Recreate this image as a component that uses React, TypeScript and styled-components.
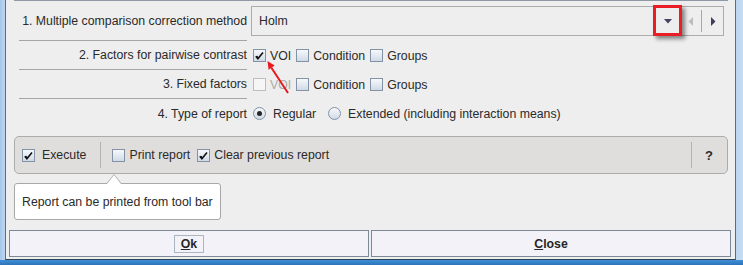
import * as React from "react";
import styled, { createGlobalStyle } from "styled-components";

const GlobalStyle = createGlobalStyle`
  html, body {
    margin: 0;
    padding: 0;
    background: #bcd6f0;
  }
  body {
    font-family: "Liberation Sans", Arial, sans-serif;
    font-size: 12.3px;
    color: #2a2a2a;
  }
`;

const Frame = styled.div`
  position: relative;
  width: 743px;
  height: 265px;
  box-sizing: border-box;
  padding: 0 7px 5px 5px;
  overflow: hidden;
  background:
    linear-gradient(to bottom, transparent 0, transparent 260px, #3f8fd6 260px, #2c73ba 265px),
    linear-gradient(to right, #a7c7e9 0, #bcd6f0 5px, #bcd6f0 736px, #c6def4 743px);
`;

const Window = styled.div`
  height: 260px;
  box-sizing: border-box;
  border: 1px solid #5d6c7c;
  border-top: none;
  border-bottom-color: #2f4458;
  background: #eeeeee;
  display: flex;
  flex-direction: column;
`;

const Main = styled.div`
  padding: 0 7px 0 8px;
  display: flex;
  flex-direction: column;
`;

const Form = styled.div`
  display: grid;
  grid-template-columns: 233px 1fr;
  border-top: 1px solid #8e99a6;
`;

const Label = styled.div<{ $height: number; $last?: boolean }>`
  margin-left: 5px;
  height: ${p => p.$height}px;
  box-sizing: border-box;
  display: flex;
  align-items: center;
  justify-content: flex-end;
  white-space: nowrap;
  border-bottom: ${p => (p.$last ? "none" : "1px solid #a5a5a5")};
`;

const Controls = styled.div<{ $gap?: number }>`
  display: flex;
  align-items: center;
  gap: ${p => p.$gap ?? 5}px;
  padding-left: 6px;
`;

const ComboCell = styled.div`
  padding: 5px 4px 0 4px;
`;

const Combo = styled.div`
  height: 30px;
  box-sizing: border-box;
  border: 1px solid #acacac;
  display: flex;
  align-items: stretch;
  padding-right: 1px;
`;

const ComboText = styled.div`
  flex: 1;
  display: flex;
  align-items: center;
  padding-left: 7px;
`;

const DropButton = styled.div`
  position: relative;
  width: 29px;
  display: flex;
  align-items: center;
  justify-content: center;
`;

const Highlight = styled.div`
  position: absolute;
  top: -2px;
  bottom: -1px;
  left: 0;
  right: 0;
  border: 3.5px solid #ea1c24;
  box-shadow: 3px 3px 4px rgba(0, 0, 0, 0.45);
`;

const NavButton = styled.div<{ $width: number }>`
  width: ${p => p.$width}px;
  display: flex;
  align-items: center;
  justify-content: center;
`;

const ComboSep = styled.div`
  width: 1px;
  margin: 3px 3px;
  background: #a7a7a7;
`;

const BoxMark = styled.span<{ $disabled?: boolean; $round?: boolean }>`
  width: 13px;
  height: 13px;
  box-sizing: border-box;
  flex: none;
  display: inline-flex;
  align-items: center;
  justify-content: center;
  border: 1px solid ${p => (p.$disabled ? "#bdbdbd" : "#8392a5")};
  border-radius: ${p => (p.$round ? "50%" : "0")};
  background: ${p =>
    p.$disabled
      ? "#f6f6f6"
      : "linear-gradient(to bottom, #f6f8fb 0%, #e4eaf2 50%, #cfd9e6 100%)"};
`;

const Dot = styled.span`
  width: 5px;
  height: 5px;
  border-radius: 50%;
  background: #262626;
`;

const OptionItem = styled.label<{ $gap: number; $disabled?: boolean }>`
  display: inline-flex;
  align-items: center;
  gap: ${p => p.$gap}px;
  white-space: nowrap;
  color: ${p => (p.$disabled ? "#ababab" : "inherit")};
`;

const Toolbar = styled.div`
  margin-top: 8px;
  height: 38px;
  box-sizing: border-box;
  border: 1px solid #ababab;
  border-radius: 5px;
  background: #e0dedc;
  display: flex;
  align-items: center;
  padding-left: 7px;
`;

const ToolSep = styled.div<{ $left: number; $right: number }>`
  width: 1px;
  height: 26px;
  margin: 0 ${p => p.$right}px 0 ${p => p.$left}px;
  background: #b3b3b3;
`;

const ToolGap = styled.span`
  width: 7px;
`;

const Spacer = styled.div`
  flex: 1;
`;

const Help = styled.div`
  font-weight: bold;
  font-size: 13px;
  padding: 0 14px 0 13px;
`;

const Tooltip = styled.div`
  position: relative;
  margin-top: 9px;
  width: 207px;
  height: 37px;
  box-sizing: border-box;
  border: 1px solid #a8a8a8;
  border-radius: 3px;
  background: #ffffff;
  display: flex;
  align-items: center;
  padding-left: 7px;
  white-space: nowrap;

  &::before,
  &::after {
    content: "";
    position: absolute;
    width: 0;
    height: 0;
  }
  &::before {
    left: 91px;
    top: -10px;
    border-left: 8.5px solid transparent;
    border-right: 8.5px solid transparent;
    border-bottom: 10px solid #a8a8a8;
  }
  &::after {
    left: 92px;
    top: -9px;
    border-left: 7.5px solid transparent;
    border-right: 7.5px solid transparent;
    border-bottom: 9px solid #ffffff;
  }
`;

const ButtonBar = styled.div`
  margin-top: 10px;
  padding: 0 4px 0 3px;
  display: grid;
  grid-template-columns: 360px 360px;
  column-gap: 2px;
`;

const DialogButton = styled.div`
  height: 27px;
  box-sizing: border-box;
  border: 1px solid #7c8a98;
  background: #f4f2f9;
  display: flex;
  align-items: center;
  justify-content: center;
  font-weight: bold;
  color: #262626;
`;

const FocusRing = styled.span`
  border: 1px solid #aab5c2;
  padding: 0 6px;
  line-height: 16px;
`;

const Annotation = styled.svg`
  position: absolute;
  left: 262px;
  top: 56px;
  pointer-events: none;
`;

const Tick = () => (
  <svg width="11" height="11" viewBox="0 0 11 11">
    <path d="M1.8 6.2 L3.9 8.8 L9 2.4" fill="none" stroke="#111" strokeWidth="1.6" />
    <path d="M2.6 6.2 L3.9 7.8" fill="none" stroke="#111" strokeWidth="1.6" />
  </svg>
);

interface OptionProps {
  label: string;
  checked?: boolean;
  disabled?: boolean;
  radio?: boolean;
  gap?: number;
}

const Option: React.FC<OptionProps> = ({ label, checked, disabled, radio, gap = 4 }) => (
  <OptionItem $gap={gap} $disabled={disabled}>
    <BoxMark $disabled={disabled} $round={radio}>
      {checked && (radio ? <Dot /> : <Tick />)}
    </BoxMark>
    {label}
  </OptionItem>
);

const Triangle = ({ dir, color }: { dir: "down" | "left" | "right"; color: string }) => {
  if (dir === "down")
    return (
      <svg width="8" height="5" viewBox="0 0 8 5">
        <path d="M0 0 H8 L4 4.5 Z" fill={color} />
      </svg>
    );
  if (dir === "left")
    return (
      <svg width="5" height="9" viewBox="0 0 5 9">
        <path d="M5 0 V9 L0.5 4.5 Z" fill={color} />
      </svg>
    );
  return (
    <svg width="5" height="9" viewBox="0 0 5 9">
      <path d="M0 0 V9 L4.5 4.5 Z" fill={color} />
    </svg>
  );
};

const App: React.FC = () => {
  return (
    <Frame>
      <GlobalStyle />
      <Window>
        <Main>
          <Form>
            <Label $height={40}>1. Multiple comparison correction method</Label>
            <ComboCell>
              <Combo>
                <ComboText>Holm</ComboText>
                <DropButton>
                  <Triangle dir="down" color="#43435f" />
                  <Highlight />
                </DropButton>
                <NavButton $width={16}>
                  <Triangle dir="left" color="#bdbdbd" />
                </NavButton>
                <ComboSep />
                <NavButton $width={17}>
                  <Triangle dir="right" color="#3d3d5c" />
                </NavButton>
              </Combo>
            </ComboCell>

            <Label $height={29}>2. Factors for pairwise contrast</Label>
            <Controls>
              <Option label="VOI" checked />
              <Option label="Condition" />
              <Option label="Groups" />
            </Controls>

            <Label $height={29}>3. Fixed factors</Label>
            <Controls>
              <Option label="VOI" disabled />
              <Option label="Condition" />
              <Option label="Groups" />
            </Controls>

            <Label $height={29} $last>
              4. Type of report
            </Label>
            <Controls $gap={12}>
              <Option label="Regular" radio checked gap={7} />
              <Option label="Extended (including interaction means)" radio gap={7} />
            </Controls>
          </Form>

          <Toolbar>
            <Option label="Execute" checked gap={7} />
            <ToolSep $left={14} $right={11} />
            <Option label="Print report" />
            <ToolGap />
            <Option label="Clear previous report" checked />
            <Spacer />
            <ToolSep $left={0} $right={0} />
            <Help>?</Help>
          </Toolbar>

          <Tooltip>Report can be printed from tool bar</Tooltip>
        </Main>

        <ButtonBar>
          <DialogButton>
            <FocusRing>
              <u>O</u>k
            </FocusRing>
          </DialogButton>
          <DialogButton>
            <span>
              <u>C</u>lose
            </span>
          </DialogButton>
        </ButtonBar>
      </Window>

      <Annotation width="30" height="40" viewBox="262 56 30 40">
        <line x1="288" y1="93" x2="271.4" y2="67.7" stroke="#e8191f" strokeWidth="2" />
        <polygon points="267.5,61 274.6,65.6 268.6,69.8" fill="#e8191f" />
      </Annotation>
    </Frame>
  );
};

export default App;
